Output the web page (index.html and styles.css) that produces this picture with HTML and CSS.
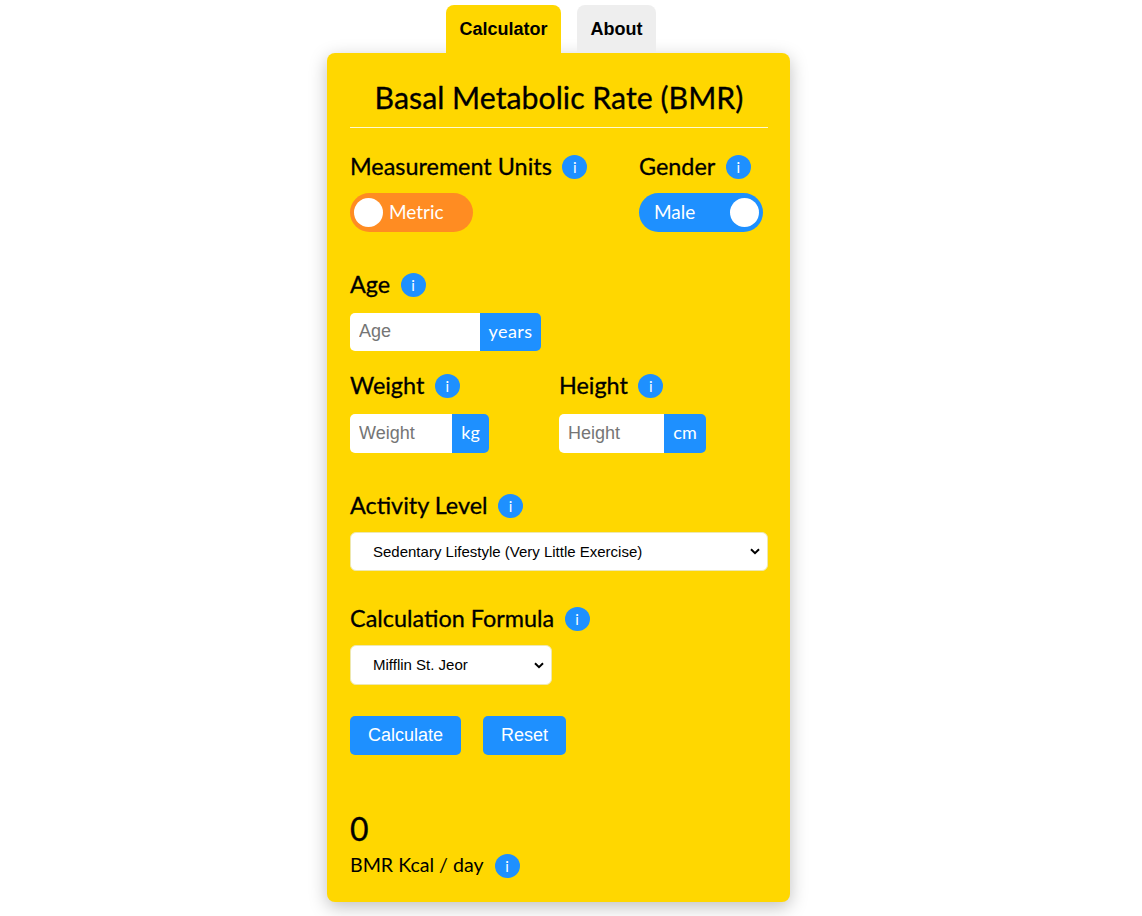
FILE: index.html
```html
<!DOCTYPE html>
<html lang="en">
<head>
  <meta charset="UTF-8">
  <meta name="viewport" content="width=device-width, initial-scale=1.0">
  <title>BMR Calculator</title>
  <link rel="stylesheet" href="styles.css">
</head>
<body>
  <nav class="tabs">
    <a class="tab active" href="#calculator">Calculator</a>
    <a class="tab" href="#about">About</a>
  </nav>

  <main class="card" id="calculator">
    <h1>Basal Metabolic Rate (BMR)</h1>

    <section class="row row-units">
      <div class="field">
        <div class="label">Measurement Units <span class="info">i</span></div>
        <div class="toggle toggle-metric"><span class="knob"></span><span class="toggle-text">Metric</span></div>
      </div>
      <div class="field">
        <div class="label">Gender <span class="info">i</span></div>
        <div class="toggle toggle-male"><span class="toggle-text">Male</span><span class="knob"></span></div>
      </div>
    </section>

    <section class="field field-age">
      <div class="label label-input">Age <span class="info">i</span></div>
      <div class="input-group">
        <input class="input-age" type="text" placeholder="Age">
        <span class="addon addon-years">years</span>
      </div>
    </section>

    <section class="row row-body">
      <div class="field col-weight">
        <div class="label label-input">Weight <span class="info">i</span></div>
        <div class="input-group tall">
          <input class="input-weight" type="text" placeholder="Weight">
          <span class="addon addon-kg">kg</span>
        </div>
      </div>
      <div class="field">
        <div class="label label-input">Height <span class="info">i</span></div>
        <div class="input-group tall">
          <input class="input-height" type="text" placeholder="Height">
          <span class="addon addon-cm">cm</span>
        </div>
      </div>
    </section>

    <section class="field field-activity">
      <div class="label">Activity Level <span class="info">i</span></div>
      <select class="select select-wide">
        <option>Sedentary Lifestyle (Very Little Exercise)</option>
        <option>Lightly Active</option>
        <option>Moderately Active</option>
      </select>
    </section>

    <section class="field field-formula">
      <div class="label">Calculation Formula <span class="info">i</span></div>
      <select class="select select-formula">
        <option>Mifflin St. Jeor</option>
        <option>Harris Benedict</option>
      </select>
    </section>

    <div class="actions">
      <button class="btn btn-calc">Calculate</button>
      <button class="btn btn-reset">Reset</button>
    </div>

    <section class="result">
      <div class="result-value">0</div>
      <div class="result-label">BMR Kcal / day <span class="info">i</span></div>
    </section>
  </main>
</body>
</html>
```

FILE: styles.css
```css
body {
  margin: 0;
  padding: 5px 25px 14px 0;
  background: #fff;
  color: #000;
  font-family: "Lato", "Noto Sans", sans-serif;
}

.tabs {
  box-sizing: border-box;
  display: flex;
  justify-content: center;
  gap: 16px;
  width: 463px;
  margin: 0 auto;
  padding-right: 15px;
}
.tab {
  height: 48px;
  padding: 0 13.5px;
  border-radius: 8px 8px 0 0;
  background: #eeeeee;
  color: #000;
  font: bold 18px/48px "Liberation Sans", Arial, sans-serif;
  text-decoration: none;
}
.tab.active {
  background: #ffd700;
}

.card {
  box-sizing: border-box;
  width: 463px;
  margin: 0 auto;
  padding: 23px 22px 25px 23px;
  background: #ffd700;
  border-radius: 8px;
  box-shadow: 0 5px 18px rgba(0, 0, 0, 0.25);
}

h1 {
  margin: 0 0 26px;
  padding: 1px 0 10px;
  height: 40px;
  border-bottom: 1px solid #fff9d0;
  font-size: 30.3px;
  font-weight: 400;
  line-height: 40px;
  text-align: center;
  -webkit-text-stroke: 0.3px #000;
}

.row {
  display: flex;
}
.row-units {
  justify-content: space-between;
  padding-right: 5px;
  margin-bottom: 40px;
}
.row-body {
  margin-bottom: 40px;
}
.col-weight {
  width: 209px;
}

.label {
  display: flex;
  align-items: center;
  gap: 10.5px;
  height: 24px;
  margin-bottom: 15px;
  font-size: 23.4px;
  font-weight: 400;
  line-height: 22px;
  white-space: nowrap;
  -webkit-text-stroke: 0.3px #000;
}
.label-input {
  margin-bottom: 17px;
}
.info {
  display: inline-block;
  flex: none;
  width: 25px;
  height: 24px;
  margin-top: 2px;
  border-radius: 50%;
  background: #1e90ff;
  color: #fff;
  font: 15px/24px "Lato", sans-serif;
  text-align: center;
  -webkit-text-stroke: 0;
}

.toggle {
  box-sizing: border-box;
  display: flex;
  align-items: center;
  height: 39px;
  border-radius: 20px;
  color: #fff;
  font-size: 19px;
}
.toggle-text {
  margin-top: -2px;
}
.toggle-metric {
  width: 123px;
  padding-left: 4px;
  gap: 6px;
  background: #ff8c22;
}
.toggle-male {
  width: 124px;
  padding: 0 4px 0 15px;
  justify-content: space-between;
  background: #1e90ff;
}
.knob {
  width: 29px;
  height: 29px;
  border-radius: 50%;
  background: #fff;
}

.field-age {
  margin-bottom: 22px;
}
.input-group {
  display: flex;
  height: 38px;
}
.input-group.tall {
  height: 39px;
}
.input-group input {
  box-sizing: border-box;
  height: 100%;
  padding: 0 9px;
  border: none;
  border-radius: 5px 0 0 5px;
  background: #fff;
  font: 18px "Liberation Sans", Arial, sans-serif;
  outline: none;
}
.input-group .input-age {
  width: 130px;
  padding-bottom: 2px;
}
.input-group .input-weight {
  width: 102px;
}
.input-group .input-height {
  width: 105px;
}
.addon {
  box-sizing: border-box;
  display: flex;
  align-items: center;
  justify-content: center;
  padding-bottom: 3px;
  border-radius: 0 5px 5px 0;
  background: #1e90ff;
  color: #fff;
  font-size: 18px;
}
.addon-years {
  width: 61px;
  letter-spacing: 0.4px;
}
.addon-kg {
  width: 37px;
}
.addon-cm {
  width: 42px;
}

.field-activity {
  margin-bottom: 35px;
}
.field-formula {
  margin-bottom: 31px;
}
.select {
  box-sizing: border-box;
  display: block;
  padding: 0 0 1px 22px;
  border: 1px solid #eee8b0;
  border-radius: 6px;
  appearance: none;
  background: #fff url("data:image/svg+xml,%3Csvg xmlns='http://www.w3.org/2000/svg' width='10' height='7' viewBox='0 0 10 7'%3E%3Cpath d='M1 1.2l4 4 4-4' fill='none' stroke='%23000' stroke-width='2'/%3E%3C/svg%3E") no-repeat right 7px center;
  color: #000;
  font: 15px "Liberation Sans", Arial, sans-serif;
}
.select-wide {
  width: 418px;
  height: 39px;
}
.select-formula {
  width: 202px;
  height: 40px;
}

.actions {
  display: flex;
  gap: 22px;
  margin-bottom: 56px;
}
.btn {
  height: 39px;
  padding: 0 18px;
  border: none;
  border-radius: 5px;
  background: #1e90ff;
  color: #fff;
  font: 18px "Liberation Sans", Arial, sans-serif;
  cursor: pointer;
}

.result-value {
  font-size: 32px;
  line-height: 36px;
  margin-bottom: 6px;
  -webkit-text-stroke: 0.3px #000;
}
.result-label {
  display: flex;
  align-items: center;
  gap: 11px;
  height: 24px;
  font-size: 19.6px;
  line-height: 20px;
}
```
